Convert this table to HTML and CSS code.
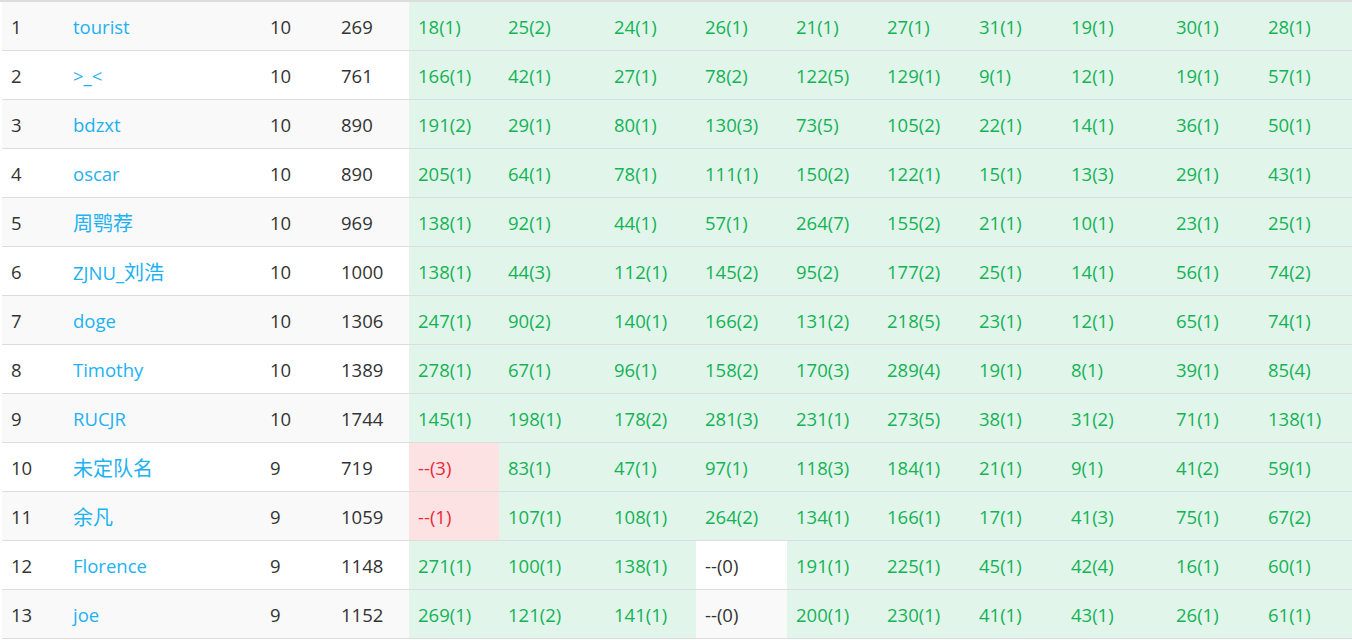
FILE: index.html
```html
<!DOCTYPE html>
<html>
<head>
<meta charset="utf-8">
<link rel="stylesheet" href="styles.css">
</head>
<body>
<div class="wrap">
<table class="rank">
<colgroup>
<col class="c-rank"><col class="c-name"><col class="c-solved"><col class="c-pen">
<col class="p90"><col class="p106"><col class="p91"><col class="p91"><col class="p91"><col class="p92"><col class="p92"><col class="p105"><col class="p92"><col class="p93">
</colgroup>
<tbody>
<tr><td>1</td><td class="name">tourist</td><td>10</td><td>269</td><td class="ac">18(1)</td><td class="ac">25(2)</td><td class="ac">24(1)</td><td class="ac">26(1)</td><td class="ac">21(1)</td><td class="ac">27(1)</td><td class="ac">31(1)</td><td class="ac">19(1)</td><td class="ac">30(1)</td><td class="ac">28(1)</td></tr>
<tr><td>2</td><td class="name">&gt;_&lt;</td><td>10</td><td>761</td><td class="ac">166(1)</td><td class="ac">42(1)</td><td class="ac">27(1)</td><td class="ac">78(2)</td><td class="ac">122(5)</td><td class="ac">129(1)</td><td class="ac">9(1)</td><td class="ac">12(1)</td><td class="ac">19(1)</td><td class="ac">57(1)</td></tr>
<tr><td>3</td><td class="name">bdzxt</td><td>10</td><td>890</td><td class="ac">191(2)</td><td class="ac">29(1)</td><td class="ac">80(1)</td><td class="ac">130(3)</td><td class="ac">73(5)</td><td class="ac">105(2)</td><td class="ac">22(1)</td><td class="ac">14(1)</td><td class="ac">36(1)</td><td class="ac">50(1)</td></tr>
<tr><td>4</td><td class="name">oscar</td><td>10</td><td>890</td><td class="ac">205(1)</td><td class="ac">64(1)</td><td class="ac">78(1)</td><td class="ac">111(1)</td><td class="ac">150(2)</td><td class="ac">122(1)</td><td class="ac">15(1)</td><td class="ac">13(3)</td><td class="ac">29(1)</td><td class="ac">43(1)</td></tr>
<tr><td>5</td><td class="name"><span class="cjk">周鹗荐</span></td><td>10</td><td>969</td><td class="ac">138(1)</td><td class="ac">92(1)</td><td class="ac">44(1)</td><td class="ac">57(1)</td><td class="ac">264(7)</td><td class="ac">155(2)</td><td class="ac">21(1)</td><td class="ac">10(1)</td><td class="ac">23(1)</td><td class="ac">25(1)</td></tr>
<tr><td>6</td><td class="name">ZJNU_<span class="cjk">刘浩</span></td><td>10</td><td>1000</td><td class="ac">138(1)</td><td class="ac">44(3)</td><td class="ac">112(1)</td><td class="ac">145(2)</td><td class="ac">95(2)</td><td class="ac">177(2)</td><td class="ac">25(1)</td><td class="ac">14(1)</td><td class="ac">56(1)</td><td class="ac">74(2)</td></tr>
<tr><td>7</td><td class="name">doge</td><td>10</td><td>1306</td><td class="ac">247(1)</td><td class="ac">90(2)</td><td class="ac">140(1)</td><td class="ac">166(2)</td><td class="ac">131(2)</td><td class="ac">218(5)</td><td class="ac">23(1)</td><td class="ac">12(1)</td><td class="ac">65(1)</td><td class="ac">74(1)</td></tr>
<tr><td>8</td><td class="name">Timothy</td><td>10</td><td>1389</td><td class="ac">278(1)</td><td class="ac">67(1)</td><td class="ac">96(1)</td><td class="ac">158(2)</td><td class="ac">170(3)</td><td class="ac">289(4)</td><td class="ac">19(1)</td><td class="ac">8(1)</td><td class="ac">39(1)</td><td class="ac">85(4)</td></tr>
<tr><td>9</td><td class="name">RUCJR</td><td>10</td><td>1744</td><td class="ac">145(1)</td><td class="ac">198(1)</td><td class="ac">178(2)</td><td class="ac">281(3)</td><td class="ac">231(1)</td><td class="ac">273(5)</td><td class="ac">38(1)</td><td class="ac">31(2)</td><td class="ac">71(1)</td><td class="ac">138(1)</td></tr>
<tr><td>10</td><td class="name"><span class="cjk">未定队名</span></td><td>9</td><td>719</td><td class="wa">--(3)</td><td class="ac">83(1)</td><td class="ac">47(1)</td><td class="ac">97(1)</td><td class="ac">118(3)</td><td class="ac">184(1)</td><td class="ac">21(1)</td><td class="ac">9(1)</td><td class="ac">41(2)</td><td class="ac">59(1)</td></tr>
<tr><td>11</td><td class="name"><span class="cjk">余凡</span></td><td>9</td><td>1059</td><td class="wa">--(1)</td><td class="ac">107(1)</td><td class="ac">108(1)</td><td class="ac">264(2)</td><td class="ac">134(1)</td><td class="ac">166(1)</td><td class="ac">17(1)</td><td class="ac">41(3)</td><td class="ac">75(1)</td><td class="ac">67(2)</td></tr>
<tr><td>12</td><td class="name">Florence</td><td>9</td><td>1148</td><td class="ac">271(1)</td><td class="ac">100(1)</td><td class="ac">138(1)</td><td>--(0)</td><td class="ac">191(1)</td><td class="ac">225(1)</td><td class="ac">45(1)</td><td class="ac">42(4)</td><td class="ac">16(1)</td><td class="ac">60(1)</td></tr>
<tr><td>13</td><td class="name">joe</td><td>9</td><td>1152</td><td class="ac">269(1)</td><td class="ac">121(2)</td><td class="ac">141(1)</td><td>--(0)</td><td class="ac">200(1)</td><td class="ac">230(1)</td><td class="ac">41(1)</td><td class="ac">43(1)</td><td class="ac">26(1)</td><td class="ac">61(1)</td></tr>
</tbody>
</table>
</div>
</body>
</html>
```

FILE: styles.css
```css
html, body {
  margin: 0;
  padding: 0;
  background: #fff;
}
body {
  font-family: "Open Sans", "Noto Sans CJK SC", sans-serif;
  font-size: 18.5px;
  color: #333;
}
.wrap {
  border-top: 2px solid #ddd;
  padding-left: 2px;
}
.rank {
  border-collapse: collapse;
  table-layout: fixed;
  width: 1350px;
}
.c-rank { width: 62px; }
.c-name { width: 197px; }
.c-solved { width: 71px; }
.c-pen { width: 77px; }
.p90 { width: 90px; }
.p91 { width: 91px; }
.p92 { width: 92px; }
.p93 { width: 93px; }
.p105 { width: 105px; }
.p106 { width: 106px; }
.rank td {
  height: 46px;
  padding: 2px 0 0 9px;
  border-bottom: 1px solid #ddd;
  vertical-align: middle;
  white-space: nowrap;
  overflow: hidden;
  line-height: 24px;
}
.rank tr:nth-child(odd) td {
  background: #f9f9f9;
}
.rank td.name {
  color: #22b1f3;
}
.cjk {
  font-family: "Noto Sans CJK SC", sans-serif;
  font-size: 20px;
}
.rank td.ac,
.rank tr:nth-child(odd) td.ac {
  background: #e2f5ea;
  color: #14b356;
}
.rank td.wa,
.rank tr:nth-child(odd) td.wa {
  background: #fde2e3;
  color: #ec2a3a;
}
```
